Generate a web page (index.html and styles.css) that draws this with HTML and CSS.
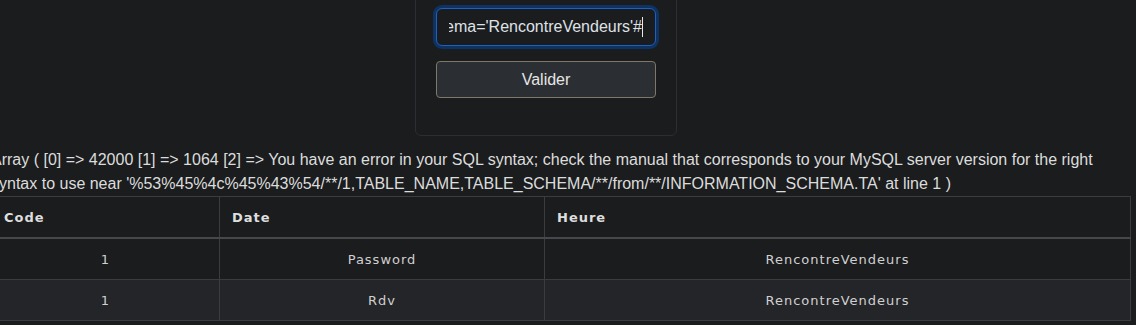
FILE: index.html
```html
<!DOCTYPE html>
<html lang="fr">
<head>
    <meta charset="UTF-8">
    <meta name="viewport" content="width=device-width, initial-scale=1.0">
    <title>Rendez-vous</title>
    <link rel="stylesheet" href="styles.css">
</head>
<body>
    <div class="page">
        <div class="card">
            <div class="field">
                <div class="field-clip">
                    <span class="field-value">1' UNION SELECT 1,TABLE_NAME,TABLE_SCHEMA from INFORMATION_SCHEMA.TABLES where table_schema='RencontreVendeurs'#</span><span class="caret"></span>
                </div>
            </div>
            <button class="btn">Valider</button>
        </div>

        <p class="error">Array ( [0] =&gt; 42000 [1] =&gt; 1064 [2] =&gt; You have an error in your SQL syntax; check the manual that corresponds to your MySQL server version for the right syntax to use near '%53%45%4c%45%43%54/**/1,TABLE_NAME,TABLE_SCHEMA/**/from/**/INFORMATION_SCHEMA.TA' at line 1 )</p>

        <table class="results">
            <thead>
                <tr>
                    <th class="col1">Code</th>
                    <th class="col2">Date</th>
                    <th class="col3">Heure</th>
                </tr>
            </thead>
            <tbody>
                <tr>
                    <td>1</td>
                    <td>Password</td>
                    <td>RencontreVendeurs</td>
                </tr>
                <tr class="striped">
                    <td>1</td>
                    <td>Rdv</td>
                    <td>RencontreVendeurs</td>
                </tr>
            </tbody>
        </table>
    </div>
</body>
</html>
```

FILE: styles.css
```css
html, body{
    margin : 0;
    padding : 0;
    background : #1b1c1e;
    overflow : hidden;
}
.page{
    margin-left : -9px;
    width : 1140px;
    font-family: 'Liberation Sans', Arial, sans-serif;
    color : #dcdcdc;
}
.card{
    box-sizing: border-box;
    margin : -13px 0 0 424px;
    width : 262px;
    padding : 20px 20px 37px;
    border : 1px solid #2d2e31;
    border-radius: 6px;
    background : #1b1c1e;
}
.field{
    box-sizing: border-box;
    height : 38px;
    padding : 0 12px;
    border : 1px solid #1f5fbf;
    border-radius: 6px;
    box-shadow: 0 0 0 3px #0d3364;
    background : #1b1c1e;
    display : flex;
    align-items: center;
}
.field-clip{
    flex-grow: 1;
    overflow : hidden;
    display : flex;
    justify-content: flex-end;
    align-items: center;
    white-space: nowrap;
    font-size : 16px;
    color : #dee2e6;
}
.field-value{
    flex-shrink: 0;
}
.caret{
    flex-shrink: 0;
    width : 1px;
    height : 20px;
    background : #e8e8e8;
}
.btn{
    display : block;
    box-sizing: border-box;
    width : 100%;
    height : 37px;
    margin-top : 15px;
    border : 1px solid #7f7767;
    border-radius: 4px;
    background : #2b2e32;
    color : #e6e6e6;
    font-family: 'Liberation Sans', Arial, sans-serif;
    font-size : 16px;
}
.error{
    margin : 12px 0 0;
    font-size : 16px;
    line-height: 24px;
}
.results{
    width : 1140px;
    border-collapse: collapse;
    border : 1px solid #3a3c3f;
    font-family: 'DejaVu Sans', sans-serif;
    font-size : 13px;
    letter-spacing: 1px;
    color : #d0d0d0;
}
.results th{
    height : 40px;
    padding : 0 12px;
    text-align: left;
    font-weight: bold;
    color : #dedede;
    border-right : 1px solid #3a3c3f;
    border-bottom: 2px solid #46494c;
}
.results td{
    height : 40px;
    padding : 0 12px;
    text-align: center;
    border : 1px solid #3a3c3f;
}
.results .col1{ width : 203px; }
.results .col2{ width : 300px; }
.results tr.striped td{
    background : #242528;
}
```
